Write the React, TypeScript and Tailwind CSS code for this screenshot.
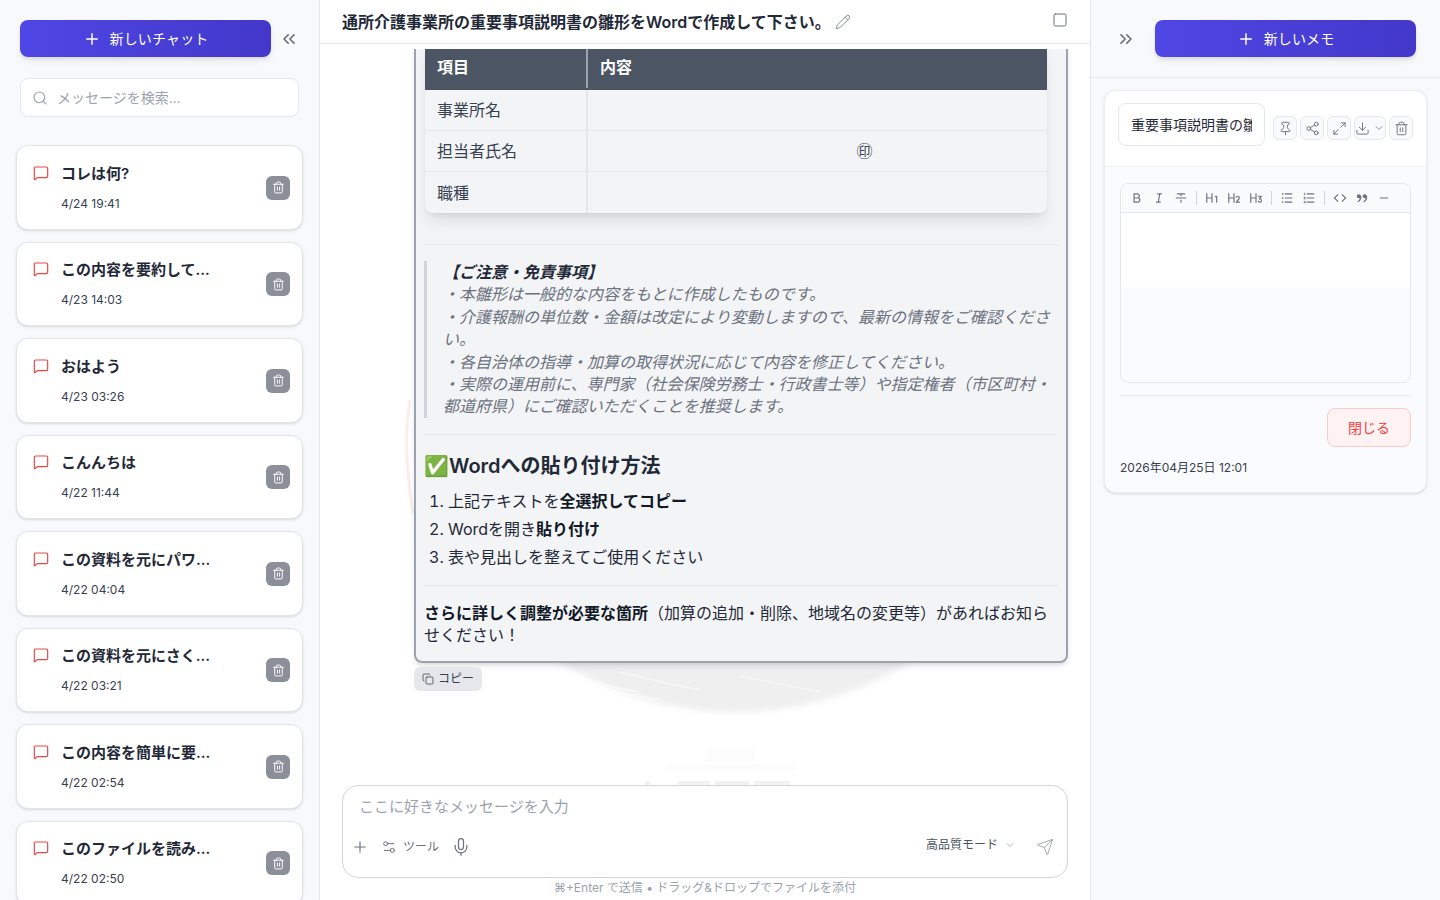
import {
  ChevronDown,
  ChevronsLeft,
  ChevronsRight,
  Copy,
  Download,
  Maximize2,
  MessageSquare,
  Mic,
  Pencil,
  Pin,
  Plus,
  Search,
  Send,
  Settings2,
  Share2,
  Square,
  Trash2,
} from 'lucide-react'
import {
  RiBold,
  RiCodeLine,
  RiDoubleQuotesR,
  RiH1,
  RiH2,
  RiH3,
  RiItalic,
  RiListOrdered,
  RiListUnordered,
  RiStrikethrough2,
  RiSubtractLine,
} from 'react-icons/ri'

const chats = [
  { title: 'コレは何?', date: '4/24 19:41' },
  { title: 'この内容を要約して...', date: '4/23 14:03' },
  { title: 'おはよう', date: '4/23 03:26' },
  { title: 'こんんちは', date: '4/22 11:44' },
  { title: 'この資料を元にパワ...', date: '4/22 04:04' },
  { title: 'この資料を元にさく...', date: '4/22 03:21' },
  { title: 'この内容を簡単に要...', date: '4/22 02:54' },
  { title: 'このファイルを読み...', date: '4/22 02:50' },
]

const rows = [
  { label: '事業所名', value: '' },
  { label: '担当者氏名', value: '㊞' },
  { label: '職種', value: '' },
]

function NewButton({ label, className }: { label: string; className: string }) {
  return (
    <button className={`h-[37px] shrink-0 rounded-lg bg-gradient-to-r from-[#4f46e5] to-[#4338ca] text-white text-sm tracking-[0.01em] flex items-center justify-center gap-[9px] shadow-md ${className}`}>
      <Plus size={18} strokeWidth={2} />
      {label}
    </button>
  )
}

function ChatItem({ title, date }: { title: string; date: string }) {
  return (
    <div className="h-[84.5px] shrink-0 bg-white border border-[#e2e4ea] rounded-xl flex items-center pt-[1px] pl-4 pr-3 shadow-sm">
      <div className="flex-1 flex gap-3">
        <MessageSquare size={16} strokeWidth={1.75} className="text-[#ef4444] mt-[1px]" />
        <div>
          <div className="text-[15px] font-semibold text-[#1f2937] leading-5">{title}</div>
          <div className="text-xs text-[#374151] mt-3 leading-4">{date}</div>
        </div>
      </div>
      <button className="w-6 h-6 rounded-md bg-[#8b8f9a] text-white flex items-center justify-center">
        <Trash2 size={13} strokeWidth={1.75} />
      </button>
    </div>
  )
}

function Sidebar() {
  return (
    <aside className="w-[320px] shrink-0 h-full bg-[#f8f9fb] border-r border-[#e5e7eb] flex flex-col overflow-hidden">
      <div className="pt-5 pl-5 pr-5">
        <div className="flex items-center">
          <NewButton label="新しいチャット" className="w-[251px]" />
          <ChevronsLeft size={20} strokeWidth={2} className="ml-2 shrink-0 text-[#6b7280]" />
        </div>
        <div className="mt-[21px] h-[39px] bg-white border border-[#e5e7eb] rounded-lg flex items-center pl-[11px] gap-[9px]">
          <Search size={16} strokeWidth={1.75} className="text-[#9ca3af]" />
          <span className="text-sm text-[#9ca3af]">メッセージを検索...</span>
        </div>
      </div>
      <div className="mt-7 ml-4 w-[287px] flex flex-col gap-3">
        {chats.map((c) => (
          <ChatItem key={c.date} title={c.title} date={c.date} />
        ))}
      </div>
    </aside>
  )
}

// faint brush circle + logo behind the chat
function Watermark() {
  return (
    <div className="absolute inset-0 pointer-events-none overflow-hidden">
      <svg width="770" height="900" viewBox="0 0 770 900" className="block">
        <defs>
          <filter id="soft">
            <feGaussianBlur stdDeviation="3" />
          </filter>
          <linearGradient id="disc" x1="0" y1="0" x2="0" y2="1">
            <stop offset="0.65" stopColor="#ffffff" />
            <stop offset="0.9" stopColor="#efeff0" />
          </linearGradient>
        </defs>
        <circle cx="415" cy="378" r="334" fill="url(#disc)" filter="url(#soft)" />
        <path d="M90 400 Q82 445 93 513" fill="none" stroke="#f9eeee" strokeWidth="3" />
        <g stroke="#ffffff" strokeWidth="1.5" fill="none" opacity="0.5">
          <path d="M240 668 Q270 684 320 692" />
          <path d="M250 676 Q290 692 340 700" />
          <path d="M300 672 Q340 682 380 690" />
          <path d="M420 676 Q470 686 500 692" />
        </g>
        <g fill="#fcfcfc">
          <rect x="385" y="748" width="50" height="14" rx="3" />
          <rect x="345" y="764" width="130" height="6" rx="2" />
        </g>
        <g fill="#f2f2f2">
          <rect x="325" y="781" width="5" height="5" />
          <rect x="358" y="781" width="32" height="5" />
          <rect x="395" y="781" width="34" height="5" />
          <rect x="434" y="781" width="36" height="5" />
        </g>
      </svg>
    </div>
  )
}

function Bubble() {
  return (
    <div className="w-[654px] -mt-[3px] border-2 border-[#9ca3af] rounded-b-lg bg-[#f3f4f6] shadow-md pl-2 pr-2 pb-[15px] text-base text-[#1f2937]">
      <div className="w-[622px] ml-[1px] -mt-[2px] rounded-b-lg overflow-hidden shadow-lg">
        <div className="flex h-[44px] pb-[2px] bg-[#4b5563] text-white font-semibold items-center">
          <div className="w-[163px] h-full border-r-2 border-[#9ca3af] pl-3 flex items-center">項目</div>
          <div className="pl-3">内容</div>
        </div>
        {rows.map((r) => (
          <div key={r.label} className="flex h-[41px] border-b border-[#e5e7eb] last:border-b-0 text-[#374151]">
            <div className="w-[163px] border-r-2 border-[#e5e7eb] pl-3 flex items-center">{r.label}</div>
            <div className="flex-1 flex items-center justify-center pl-[94px]">{r.value}</div>
          </div>
        ))}
      </div>
      <hr className="mt-[31px] border-[#e5e7eb]" />
      <blockquote className="mt-[16px] border-l-[3px] border-[#d1d5db] pl-4 italic text-[#6b7280] leading-[22.4px]">
        <div className="font-bold text-[#1f2937]">【ご注意・免責事項】</div>
        <div>・本雛形は一般的な内容をもとに作成したものです。</div>
        <div>・介護報酬の単位数・金額は改定により変動しますので、最新の情報をご確認ください。</div>
        <div>・各自治体の指導・加算の取得状況に応じて内容を修正してください。</div>
        <div>・実際の運用前に、専門家（社会保険労務士・行政書士等）や指定権者（市区町村・都道府県）にご確認いただくことを推奨します。</div>
      </blockquote>
      <hr className="mt-[16px] border-[#e5e7eb]" />
      <h2 className="mt-[17px] text-xl font-semibold text-[#1f2937] leading-7">✅Wordへの貼り付け方法</h2>
      <ol className="mt-[7px] list-decimal pl-6 leading-7">
        <li>上記テキストを<strong className="text-[#111827]">全選択してコピー</strong></li>
        <li>Wordを開き<strong className="text-[#111827]">貼り付け</strong></li>
        <li>表や見出しを整えてご使用ください</li>
      </ol>
      <hr className="mt-[14px] border-[#e5e7eb]" />
      <p className="mt-[16px] leading-[22px]">
        <strong className="text-[#111827]">さらに詳しく調整が必要な箇所</strong>（加算の追加・削除、地域名の変更等）があればお知らせください！
      </p>
    </div>
  )
}

function Composer() {
  return (
    <div className="px-[22px] shrink-0 relative">
      <div className="h-[93px] bg-white border border-[#d1d5db] rounded-2xl px-4 pt-[11px]">
        <div className="text-[15px] text-[#9ca3af] leading-5">ここに好きなメッセージを入力</div>
        <div className="mt-[20px] flex items-center text-[#6b7280]">
          <Plus size={18} strokeWidth={1.5} className="-ml-[8px]" />
          <Settings2 size={16} strokeWidth={1.5} className="ml-[12px]" />
          <span className="ml-[6px] text-xs">ツール</span>
          <Mic size={20} strokeWidth={1.5} className="ml-[12px]" />
          <span className="ml-auto text-xs text-[#4b5563] -mt-1">高品質モード</span>
          <ChevronDown size={12} strokeWidth={1.5} className="ml-[6px] text-[#9ca3af] -mt-1" />
          <Send size={18} strokeWidth={1.25} className="ml-5 text-[#9ca3af] -mr-[3px]" />
        </div>
      </div>
      <div className="text-center text-xs text-[#9ca3af] leading-4 mt-[2px] mb-[4px]">⌘+Enter で送信 • ドラッグ&ドロップでファイルを添付</div>
    </div>
  )
}

function Main() {
  return (
    <main className="flex-1 h-full min-w-0 flex flex-col bg-white relative">
      <Watermark />
      <header className="h-[44px] shrink-0 bg-white border-b border-[#e5e7eb] flex items-center px-[22px] relative">
        <h1 className="text-base font-semibold text-[#1f2937]">通所介護事業所の重要事項説明書の雛形をWordで作成して下さい。</h1>
        <Pencil size={16} strokeWidth={1.25} className="ml-1 text-[#6b7280]" />
        <Square size={16} strokeWidth={1.5} className="ml-auto -mt-1 text-[#6b7280]" />
      </header>
      <div className="flex-1 min-h-0 mt-[5px] overflow-hidden flex flex-col justify-start pl-[94px] relative">
        <Bubble />
        <button className="mt-[4px] w-[68px] h-6 shrink-0 rounded-md bg-[#e5e7eb] text-xs text-[#374151] flex items-center justify-center gap-1">
          <Copy size={12} strokeWidth={1.5} />
          コピー
        </button>
      </div>
      <Composer />
    </main>
  )
}

const toolGroups = [
  [RiBold, RiItalic, RiStrikethrough2],
  [RiH1, RiH2, RiH3],
  [RiListUnordered, RiListOrdered],
  [RiCodeLine, RiDoubleQuotesR, RiSubtractLine],
]

function MemoToolbar() {
  return (
    <div className="h-[29px] bg-[#f9fafb] border-b border-[#e5e7eb] flex items-center pl-[5px] text-[#6b7280]">
      {toolGroups.map((group, i) => (
        <div key={i} className="flex items-center">
          {i > 0 && <div className="w-px h-[14px] bg-[#d1d5db] mx-[4px]" />}
          {group.map((Icon, j) => (
            <div key={j} className="w-[22px] flex justify-center">
              <Icon size={14} />
            </div>
          ))}
        </div>
      ))}
    </div>
  )
}

function IconBox({ children, className = 'w-6' }: { children: React.ReactNode; className?: string }) {
  return (
    <button className={`h-6 ${className} rounded-md bg-[#f9fafb] border border-[#e5e7eb] text-[#6b7280] flex items-center justify-center gap-[3px]`}>
      {children}
    </button>
  )
}

function MemoPanel() {
  return (
    <aside className="w-[350px] shrink-0 h-full bg-[#f8f9fb] border-l border-[#e5e7eb] flex flex-col">
      <div className="h-[78px] shrink-0 border-b border-[#e5e7eb] pt-5 pl-[26px] flex items-start">
        <ChevronsRight size={20} strokeWidth={2} className="mt-[9px] -ml-[1px] text-[#6b7280]" />
        <NewButton label="新しいメモ" className="w-[261px] ml-[19px]" />
      </div>
      <div className="ml-[13px] mt-[12px] w-[323px] h-[403px] bg-white border border-[#eceef2] rounded-xl shadow-sm overflow-hidden">
        <div className="h-[76px] border-b border-[#f0f1f4] flex items-start pl-[13px] pt-3">
          <div className="w-[147px] h-[43px] border border-[#e5e7eb] rounded-lg flex items-center px-3 overflow-hidden">
            <span className="text-sm text-[#1f2937] whitespace-nowrap overflow-hidden">重要事項説明書の雛形</span>
          </div>
          <div className="ml-2 mt-[13px] flex gap-[3px]">
            <IconBox><Pin size={15} strokeWidth={1.5} /></IconBox>
            <IconBox><Share2 size={15} strokeWidth={1.5} /></IconBox>
            <IconBox><Maximize2 size={15} strokeWidth={1.5} /></IconBox>
            <IconBox className="w-[32px]">
              <Download size={15} strokeWidth={1.5} />
              <ChevronDown size={12} strokeWidth={1.5} />
            </IconBox>
            <IconBox><Trash2 size={15} strokeWidth={1.5} /></IconBox>
          </div>
        </div>
        <div className="bg-[#fafbfc] h-full px-[15px] pt-4">
          <div className="h-[200px] border border-[#e5e7eb] rounded-lg overflow-hidden bg-[#fafbfc]">
            <MemoToolbar />
            <div className="h-[74px] bg-white" />
          </div>
          <hr className="mt-3 border-[#e5e7eb]" />
          <div className="mt-3 flex justify-end">
            <button className="w-[84px] h-[39px] rounded-lg bg-[#fef2f2] border border-[#fecaca] text-sm text-[#ef4444]">閉じる</button>
          </div>
          <div className="mt-[13px] text-xs text-[#374151] leading-4">2026年04月25日 12:01</div>
        </div>
      </div>
    </aside>
  )
}

export default function App() {
  return (
    <div className="w-[1440px] h-[900px] flex overflow-hidden font-['Inter','Noto_Sans_CJK_JP',sans-serif]">
      <Sidebar />
      <Main />
      <MemoPanel />
    </div>
  )
}
